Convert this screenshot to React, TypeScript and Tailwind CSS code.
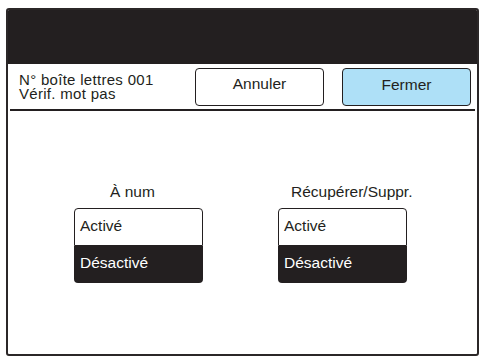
const ink = '#231f20';

type ToggleProps = {
    label: string;
    labelOffset: string;
};

const ToggleGroup: React.FC<ToggleProps> = ({ label, labelOffset }) => (
    <div className="flex w-[129px] flex-col">
        <div
            className={`${labelOffset} mb-[7px] whitespace-nowrap leading-[18px] text-[#231f20]`}
        >
            {label}
        </div>
        <div className="flex h-[38px] items-center rounded-t-[4px] border border-[#231f20] bg-white pb-[3px] pl-[5px] text-[#231f20]">
            Activé
        </div>
        <div className="flex h-[37px] items-center rounded-b-[4px] bg-[#231f20] pb-[3px] pl-[6px] text-white">
            Désactivé
        </div>
    </div>
);

export default function App() {
    return (
        <div
            className="h-[359px] w-[482px] bg-white pl-[6px] pt-[8px] text-[15.5px]"
            style={{ fontFamily: '"Liberation Sans", Arial, sans-serif', color: ink }}
        >
            <div className="flex h-[348px] w-[473px] flex-col overflow-hidden rounded-[3px] border-2 border-[#2b2728] bg-white">
                {/* dark title bar */}
                <div className="h-[54px] shrink-0 bg-[#231f20]" />

                {/* header row */}
                <div className="flex h-[45px] shrink-0 items-center">
                    <div className="ml-[11px] w-[176px] text-[15px] leading-[14px] tracking-[0.3px]">
                        <div>N° boîte lettres 001</div>
                        <div>Vérif. mot pas</div>
                    </div>
                    <button className="h-[38px] w-[129px] rounded-[4px] border border-[#231f20] bg-white pb-[6px] text-center leading-[17px]">
                        Annuler
                    </button>
                    <button className="ml-[18px] h-[38px] w-[129px] rounded-[4px] border border-[#231f20] bg-[#aee0f7] pb-[4px] text-center leading-[17px]">
                        Fermer
                    </button>
                </div>
                <div className="mx-[2px] h-[2px] shrink-0 bg-[#231f20]" />

                {/* options */}
                <div className="flex gap-[75px] pl-[66px] pt-[72px]">
                    <ToggleGroup label="À num" labelOffset="pl-[36px]" />
                    <ToggleGroup label="Récupérer/Suppr." labelOffset="pl-[13px]" />
                </div>
            </div>
        </div>
    );
}
